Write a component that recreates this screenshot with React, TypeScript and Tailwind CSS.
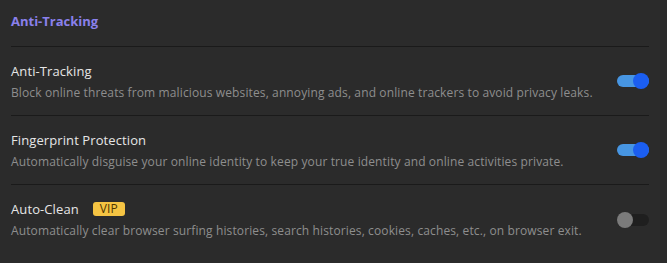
import React from "react";

type Row = {
  title: string;
  desc: string;
  on: boolean;
  vip?: boolean;
};

const rows: Row[] = [
  {
    title: "Anti-Tracking",
    desc: "Block online threats from malicious websites, annoying ads, and online trackers to avoid privacy leaks.",
    on: true,
  },
  {
    title: "Fingerprint Protection",
    desc: "Automatically disguise your online identity to keep your true identity and online activities private.",
    on: true,
  },
  {
    title: "Auto-Clean",
    desc: "Automatically clear browser surfing histories, search histories, cookies, caches, etc., on browser exit.",
    on: false,
    vip: true,
  },
];

function Toggle({ on }: { on: boolean }) {
  return (
    <div className="relative w-[32px] h-[16px] flex items-center">
      <div className={`w-full h-[12px] rounded-full ${on ? "bg-[#4796e3]" : "bg-[#1f1f1f]"}`} />
      <div
        className={`absolute top-0 w-[16px] h-[16px] rounded-full ${
          on ? "right-0 bg-[#1b5ef0]" : "left-0 bg-[#7b7b7b]"
        }`}
      />
    </div>
  );
}

export default function App() {
  return (
    <div
      className="w-[667px] h-[263px] bg-[#2b2b2b] pl-[11px] pr-[18px] overflow-hidden"
      style={{ fontFamily: '"Open Sans", "Noto Sans", sans-serif' }}
    >
      {/* Titulo */}
      <div className="h-[47px] flex items-center border-b border-[#1a1a1a]">
        <h2 className="text-[13px] font-bold text-[#8a80ec] -mt-[3px]">Anti-Tracking</h2>
      </div>

      {rows.map((r, i) => (
        <div
          key={r.title}
          className={`h-[69px] flex items-center justify-between ${i < rows.length - 1 ? "border-b border-[#1a1a1a]" : ""}`}
        >
          <div className="flex flex-col gap-[5px]">
            <div className="flex items-center gap-[14px] text-[13px] text-[#e6e6e6] leading-[18px] tracking-[0.1px]">
              {r.title}
              {r.vip && (
                <span className="px-[7px] h-[14px] leading-[14px] rounded-[3px] bg-[#f5c443] text-[#4f3600] text-[12px] font-medium">
                  VIP
                </span>
              )}
            </div>
            <p className="text-[12px] text-[#8e8e8e] leading-[16px] tracking-[0.12px]">{r.desc}</p>
          </div>
          <Toggle on={r.on} />
        </div>
      ))}
    </div>
  );
}
